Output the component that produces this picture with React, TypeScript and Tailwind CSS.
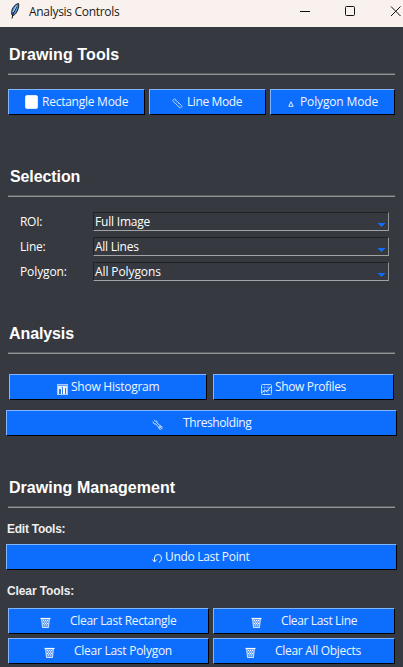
import type { ReactNode } from "react";

const ui = "font-['Open_Sans','Noto_Sans',sans-serif] text-xs leading-4 whitespace-nowrap";
const subheading = "ml-[7px] h-4 font-['Liberation_Sans',Arial,sans-serif] text-xs leading-4 font-bold text-[#eee]";

function Heading({ children, className = "" }: { children: ReactNode; className?: string }) {
  return (
    <h2 className={`h-5 shrink-0 font-['Liberation_Sans',Arial,sans-serif] text-base leading-5 font-bold text-white ${className}`}>
      {children}
    </h2>
  );
}

function Rule() {
  return <div className="mr-2 ml-2 h-0.5 shrink-0 border-t border-b border-t-[#5c5f62] border-b-[#929495]" />;
}

function Button({ className, icon, label, labelClass }: { className: string; icon: ReactNode; label: string; labelClass: string }) {
  return (
    <button
      className={`flex h-[26px] shrink-0 items-start border border-t-[#83b5ff] border-r-black border-b-black border-l-[#83b5ff] bg-[#0d6efd] text-left text-[#f0f5ff] ${ui} ${className}`}
    >
      {icon}
      <span className={`mt-1 ${labelClass}`}>{label}</span>
    </button>
  );
}

function Trash() {
  return (
    <svg className="mt-2 h-[11px] w-[11px] shrink-0" viewBox="0 0 11 11" fill="none">
      <path d="M1.5 2h8l-.8 8.5H2.3z" fill="#5f9dff" />
      <path d="M.5 1.5h10" stroke="#fff" strokeWidth="1.2" />
      <path d="M1.7 2l.8 8.5h6L9.3 2" stroke="#d5e5ff" />
      <path d="M3 3.5h1m1 0h1m1 0h1M4 5h1m1 0h1M3 6.5h1m1 0h1m1 0h1M4 8h1m1 0h1" stroke="#fff" />
    </svg>
  );
}

function Chart() {
  return (
    <svg className="mt-[9px] h-[11px] w-[11px] shrink-0" viewBox="0 0 11 11">
      <rect x=".5" y=".5" width="10" height="10" fill="#dceaff" stroke="#a9c9ff" />
      <path d="M1 1h9v1H1z" fill="#5c9bff" />
      <path d="M2 5h2v5H2zM5 3h1v7H5zM8 4h1v6H8z" fill="#2f78ec" />
      <path d="M4 4h1v6H4zM6 2h2v8H6z" fill="#fff" />
    </svg>
  );
}

function Profile() {
  return (
    <svg className="mt-[9px] h-[11px] w-[11px] shrink-0" viewBox="0 0 11 11" fill="none">
      <rect x=".5" y=".5" width="10" height="10" rx="1" stroke="#b9d5ff" />
      <path d="M1 3.5h9M1 6.5h9M3.5 1v9M7 1v9" stroke="#5e9dff" strokeWidth=".8" />
      <path d="M1 8.5l3-2 2 1 4-5" stroke="#e8f1ff" />
    </svg>
  );
}

function Field({ label, value, labelClass, valueClass }: { label: string; value: string; labelClass: string; valueClass: string }) {
  return (
    <div className={`flex h-[19px] items-start text-white ${ui}`}>
      <span className={`w-[73px] shrink-0 pt-0.5 ${labelClass}`}>{label}</span>
      <div className="flex h-[19px] w-[296px] justify-between border border-t-[#202225] border-r-[#929597] border-b-[#a1a3a5] border-l-[#202225] pr-[3px] pl-px">
        <span className={`pt-px ${valueClass}`}>{value}</span>
        <svg className="mt-2.5 h-1 w-[7px]" viewBox="0 0 7 4" shapeRendering="crispEdges">
          <path d="M0 0h7v1H6v1H5v1H4v1H3V3H2V2H1V1H0z" fill="#0d6efd" />
        </svg>
      </div>
    </div>
  );
}

export default function App() {
  return (
    <div className="flex h-[667px] w-[403px] flex-col overflow-hidden bg-[#363940]">
      <header className={`flex h-[27px] shrink-0 items-start overflow-hidden bg-[#f9f1ed] text-[#191919] ${ui}`}>
        <svg className="mt-[3px] ml-2.5 h-4 w-[10px] shrink-0" viewBox="0 0 10 16">
          <path d="M2 12C.5 7 4 1.500 8.500.5 9.500 4 7 10.500 3.500 12.500z" fill="#4f94dc" stroke="#15171b" />
          <path d="M2 15.500L3 11l4-8" fill="none" stroke="#111" />
          <path d="M3 9l3.500-6" fill="none" stroke="#b4dafa" />
        </svg>
        <h1 className="mt-1 ml-[9px] w-[271px] shrink-0 tracking-[-0.3px]">Analysis Controls</h1>
        <svg className="mt-1.5 h-[11px] w-[104px] shrink-0" viewBox="0 0 104 11" fill="none" stroke="#111">
          <path d="M0 5.500h10" />
          <rect x="45.500" y=".5" width="9" height="9" rx="1" />
          <path d="M91 .5l9.500 9.500m0-9.500l-9.500 9.500" />
        </svg>
      </header>

      <Heading className="mt-[18px] mb-2 ml-[9px] tracking-[0.1px]">Drawing Tools</Heading>
      <Rule />
      <div className="mt-3.5 flex gap-1 pl-2">
        <Button
          className="w-[137px] pl-4"
          icon={<span className="mt-[5px] h-[14px] w-[13px] rounded-[2px] border border-[#d8e8ff] bg-white" />}
          label="Rectangle Mode"
          labelClass="ml-1 tracking-[-0.25px]"
        />
        <Button
          className="w-[117px] pl-[22px]"
          icon={
            <svg className="mt-2 h-[11px] w-[11px] shrink-0" viewBox="0 0 11 11" fill="none">
              <path d="M2.5.8l7.700 7.400-2 2L.6 2.800z" stroke="#c5dcff" strokeWidth=".9" />
              <path d="M3 3l1-1m.5 2.500l1-1M6 6l1-1m.5 2.500l1-1" stroke="#9fc5ff" strokeWidth=".7" />
            </svg>
          }
          label="Line Mode"
          labelClass="ml-1 tracking-[-0.4px]"
        />
        <Button
          className="w-[125px] pl-[17px]"
          icon={
            <svg className="mt-[11px] h-1.5 w-1.5 shrink-0" viewBox="0 0 6 6" fill="none">
              <path d="M3 .8L.8 5.300h4.400z" stroke="#e2edff" />
            </svg>
          }
          label="Polygon Mode"
          labelClass="ml-1.5 tracking-[-0.15px]"
        />
      </div>

      <Heading className="mt-[52px] mb-2 ml-2.5 tracking-[-0.1px]">Selection</Heading>
      <Rule />
      <div className="mt-[15px] flex flex-col gap-1.5 pl-5">
        <Field label="ROI:" value="Full Image" labelClass="tracking-[-0.3px]" valueClass="tracking-[-0.2px]" />
        <Field label="Line:" value="All Lines" labelClass="tracking-[-0.2px]" valueClass="tracking-[-0.25px]" />
        <Field label="Polygon:" value="All Polygons" labelClass="tracking-[-0.1px]" valueClass="tracking-[-0.1px]" />
      </div>

      <Heading className="mt-[43px] mb-2 ml-[9px] tracking-[-0.1px]">Analysis</Heading>
      <Rule />
      <div className="mt-5 flex gap-1.5 pl-[9px]">
        <Button className="w-[198px] pl-[47px]" icon={<Chart />} label="Show Histogram" labelClass="ml-[3px] tracking-[-0.25px]" />
        <Button className="w-[181px] pl-[47px]" icon={<Profile />} label="Show Profiles" labelClass="ml-[3px] tracking-[-0.35px]" />
      </div>
      <Button
        className="mt-2.5 ml-1.5 w-[391px] pl-[145px]"
        icon={
          <svg className="mt-2 h-[11px] w-[11px] shrink-0" viewBox="0 0 11 11" fill="none" stroke="#d8e7ff">
            <path d="M2 .8l1.300 1.500L4.800 2l.2 2 4.300 3.500-1.800 2L4 5 2 4.800.8 2.600" strokeWidth=".9" />
            <circle cx="8.500" cy="8.700" r="1.600" strokeWidth=".9" />
          </svg>
        }
        label="Thresholding"
        labelClass="ml-5 tracking-[-0.4px]"
      />

      <Heading className="mt-[42px] mb-2 ml-[9px] tracking-[0.04px]">Drawing Management</Heading>
      <Rule />
      <h3 className={`mt-[13px] tracking-[-0.25px] ${subheading}`}>Edit Tools:</h3>
      <Button
        className="mt-[7px] ml-1.5 w-[391px] pl-[145px]"
        icon={
          <svg className="mt-2 h-[11px] w-[11px] shrink-0" viewBox="0 0 11 11" fill="none" stroke="#e8f1ff">
            <path d="M2.5 8.500V5a3.500 3.500 0 0 1 7 0c0 2-1 3.500-2.500 4.500M.5 6.500l2 2.500 2.200-2.500" />
          </svg>
        }
        label="Undo Last Point"
        labelClass="ml-[2px] tracking-[-0.3px]"
      />
      <h3 className={`mt-[13px] tracking-[-0.1px] ${subheading}`}>Clear Tools:</h3>
      <div className="mt-[9px] grid grid-cols-[201px_182px] gap-1 pl-2">
        <Button className="w-[201px] pl-[31px]" icon={<Trash />} label="Clear Last Rectangle" labelClass="ml-[19px] tracking-[-0.31px]" />
        <Button className="w-[182px] pl-[37px]" icon={<Trash />} label="Clear Last Line" labelClass="ml-[19px] tracking-[-0.36px]" />
        <Button className="w-[201px] pl-[35px]" icon={<Trash />} label="Clear Last Polygon" labelClass="ml-[19px] tracking-[-0.26px]" />
        <Button className="w-[182px] pl-[31px]" icon={<Trash />} label="Clear All Objects" labelClass="ml-[19px] tracking-[-0.3px]" />
      </div>
    </div>
  );
}
